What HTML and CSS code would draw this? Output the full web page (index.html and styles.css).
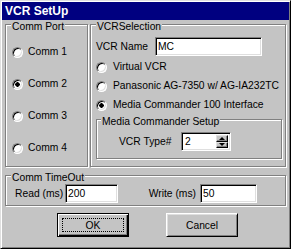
FILE: index.html
```html
<!DOCTYPE html>
<html>
<head>
    <title>VCR SetUp</title>
    <link rel="stylesheet" href="styles.css">
</head>
<body>
    <div class="window">
        <div class="titlebar">VCR SetUp</div>
        <div class="client">
            <div class="top-row">
                <div class="group comm-port">
                    <span class="caption">Comm Port</span>
                    <div class="port-list">
                        <label class="option"><span class="radio"></span>Comm 1</label>
                        <label class="option"><span class="radio checked"></span>Comm 2</label>
                        <label class="option"><span class="radio"></span>Comm 3</label>
                        <label class="option"><span class="radio"></span>Comm 4</label>
                    </div>
                </div>
                <div class="group vcr-selection">
                    <span class="caption">VCRSelection</span>
                    <div class="name-row">
                        <label for="vcr_name" class="name-label">VCR Name</label>
                        <input type="text" id="vcr_name" class="field name-field" value="MC">
                    </div>
                    <div class="vcr-list">
                        <label class="option"><span class="radio"></span>Virtual VCR</label>
                        <label class="option"><span class="radio"></span>Panasonic AG-7350 w/ AG-IA232TC</label>
                        <label class="option"><span class="radio checked"></span>Media Commander 100 Interface</label>
                    </div>
                    <div class="group mc-setup">
                        <span class="caption">Media Commander Setup</span>
                        <div class="type-row">
                            <span class="type-label">VCR Type#</span>
                            <div class="field spin-field">
                                <span class="spin-value">2</span>
                                <span class="spinner">
                                    <span class="spin-btn"><span class="arrow-up"></span></span>
                                    <span class="spin-btn"><span class="arrow-down"></span></span>
                                </span>
                            </div>
                        </div>
                    </div>
                </div>
            </div>
            <div class="group timeout">
                <span class="caption">Comm TimeOut</span>
                <div class="timeout-row">
                    <label for="read_ms" class="read-label">Read (ms)</label>
                    <input type="text" id="read_ms" class="field read-field" value="200">
                    <label for="write_ms" class="write-label">Write (ms)</label>
                    <input type="text" id="write_ms" class="field write-field" value="50">
                </div>
            </div>
            <div class="buttons">
                <button class="btn default"><span class="focus">OK</span></button>
                <button class="btn">Cancel</button>
            </div>
        </div>
    </div>
</body>
</html>
```

FILE: styles.css
```css
body {
    margin: 0;
    background-color: #c4c4c4;
    font-family: "Liberation Sans", Arial, sans-serif;
    font-size: 10.3px;
    line-height: 12px;
    color: #000;
}
.window {
    width: 291px;
    height: 249px;
    box-sizing: border-box;
    padding: 1px;
    border: 1px solid;
    border-color: #dfdfdf #000 #000 #dfdfdf;
    box-shadow: inset 1px 1px 0 #fff, inset -1px -1px 0 #808080;
    background-color: #c4c4c4;
}
.titlebar {
    height: 18px;
    line-height: 18px;
    padding-left: 3px;
    background-color: #000080;
    color: #fff;
    font-weight: bold;
    font-size: 12px;
}
.client {
    padding: 4px 3px 0 3px;
}
.top-row {
    display: flex;
    gap: 2px;
}
.group {
    display: flex;
    flex-direction: column;
    box-sizing: border-box;
    border: 1px solid #808080;
    box-shadow: 1px 1px 0 #fff, inset 1px 1px 0 #fff;
}
.caption {
    align-self: flex-start;
    margin: -4px 0 0 4px;
    padding: 0 1px;
    background-color: #c4c4c4;
    white-space: nowrap;
}
.comm-port {
    width: 83px;
    height: 143px;
    padding-left: 6px;
}
.comm-port .caption {
    margin-left: -1px;
}
.port-list {
    display: flex;
    flex-direction: column;
    gap: 20px;
    margin-top: 13px;
}
.option {
    display: flex;
    align-items: center;
    height: 12px;
    white-space: nowrap;
}
.radio {
    width: 11px;
    height: 11px;
    box-sizing: border-box;
    margin-right: 5px;
    border-radius: 50%;
    border: 1px solid;
    border-color: #808080 #fff #fff #808080;
    box-shadow: inset 1px 1px 0 #000, inset -1px -1px 0 #dfdfdf;
    background-color: #fff;
    flex-shrink: 0;
}
.radio.checked {
    background: radial-gradient(circle, #000 0, #000 2px, #fff 2.5px);
}
.vcr-selection {
    flex: 1;
    height: 143px;
    padding: 0 3px 0 5px;
}
.vcr-selection > .caption {
    margin-left: 0;
}
.name-row {
    display: flex;
    align-items: center;
    margin-top: 4px;
}
.name-label {
    width: 59px;
}
.field {
    box-sizing: border-box;
    height: 19px;
    padding: 0 0 0 2px;
    border: 1px solid;
    border-color: #808080 #fff #fff #808080;
    box-shadow: inset 1px 1px 0 #000, inset -1px -1px 0 #dfdfdf;
    background-color: #fff;
    font-family: "Liberation Sans", Arial, sans-serif;
    font-size: 10.3px;
    color: #000;
    outline: none;
}
.name-field {
    width: 107px;
}
.vcr-list {
    display: flex;
    flex-direction: column;
    gap: 7px;
    margin-top: 5px;
}
.vcr-list .radio {
    margin-right: 6px;
}
.mc-setup {
    height: 40px;
    margin-top: 8px;
}
.type-row {
    display: flex;
    align-items: center;
    margin-top: 4px;
    padding-left: 22px;
}
.type-label {
    width: 62px;
}
.spin-field {
    display: flex;
    width: 50px;
    padding: 2px 2px 2px 3px;
}
.spin-value {
    flex: 1;
    line-height: 13px;
}
.spinner {
    display: flex;
    flex-direction: column;
    width: 12px;
}
.spin-btn {
    flex: 1;
    display: flex;
    align-items: center;
    justify-content: center;
    box-sizing: border-box;
    border: 1px solid;
    border-color: #dfdfdf #000 #000 #dfdfdf;
    box-shadow: inset -1px -1px 0 #808080;
    background-color: #c4c4c4;
}
.arrow-up, .arrow-down {
    width: 0;
    height: 0;
    border-left: 3px solid transparent;
    border-right: 3px solid transparent;
}
.arrow-up {
    border-bottom: 3px solid #000;
}
.arrow-down {
    border-top: 3px solid #000;
}
.timeout {
    height: 31px;
    margin-top: 8px;
    padding-left: 9px;
}
.timeout .caption {
    margin-left: -4px;
}
.timeout-row {
    display: flex;
    align-items: center;
}
.read-label {
    width: 50px;
    white-space: nowrap;
}
.read-field {
    width: 53px;
}
.write-label {
    width: 82px;
    flex-shrink: 0;
    box-sizing: border-box;
    padding-right: 4px;
    text-align: right;
    white-space: nowrap;
}
.write-field {
    width: 57px;
}
.buttons {
    display: flex;
    gap: 37px;
    margin-top: 7px;
    padding-left: 52px;
}
.btn {
    width: 72px;
    height: 24px;
    padding: 0;
    border: 1px solid;
    border-color: #fff #000 #000 #fff;
    box-shadow: inset 1px 1px 0 #dfdfdf, inset -1px -1px 0 #808080;
    background-color: #c4c4c4;
    font-family: "Liberation Sans", Arial, sans-serif;
    font-size: 10.3px;
    color: #000;
}
.btn.default {
    border: 1px solid #000;
    box-shadow: inset 1px 1px 0 #fff, inset -1px -1px 0 #000, inset -2px -2px 0 #808080;
    display: flex;
    padding: 4px;
}
.focus {
    flex: 1;
    display: flex;
    align-items: center;
    justify-content: center;
    border: 1px dotted #000;
}
```
